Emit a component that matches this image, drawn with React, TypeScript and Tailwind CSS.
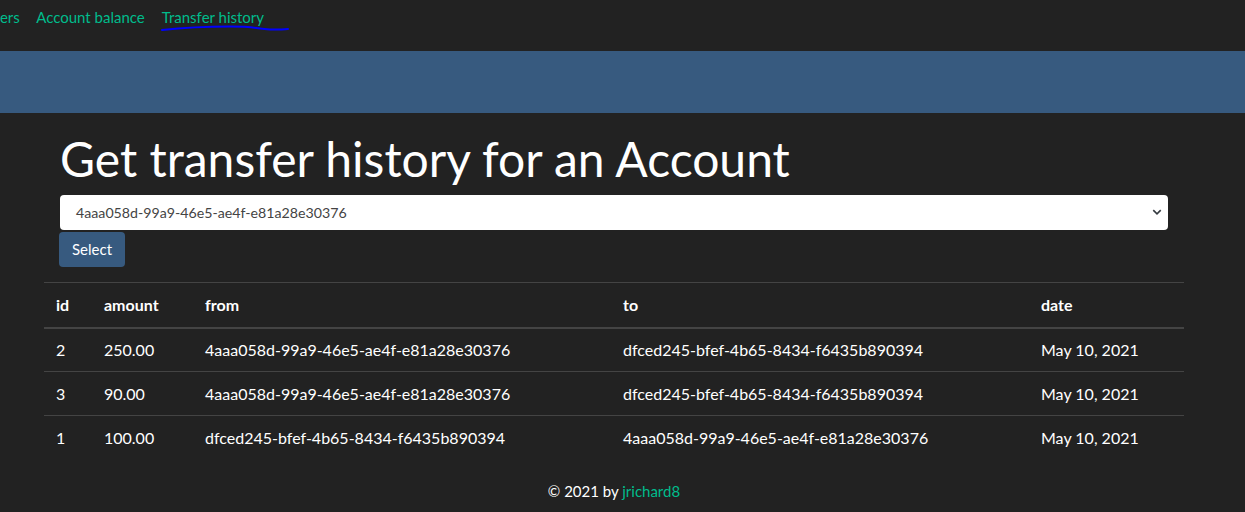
import React from "react";

const transfers = [
  { id: 2, amount: "250.00", from: "4aaa058d-99a9-46e5-ae4f-e81a28e30376", to: "dfced245-bfef-4b65-8434-f6435b890394", date: "May 10, 2021" },
  { id: 3, amount: "90.00", from: "4aaa058d-99a9-46e5-ae4f-e81a28e30376", to: "dfced245-bfef-4b65-8434-f6435b890394", date: "May 10, 2021" },
  { id: 1, amount: "100.00", from: "dfced245-bfef-4b65-8434-f6435b890394", to: "4aaa058d-99a9-46e5-ae4f-e81a28e30376", date: "May 10, 2021" },
];

export default function App() {
  return (
    <div className="min-h-[512px] w-[1245px] overflow-hidden bg-[#222222] text-white font-['Lato',sans-serif] text-[15px]">
      <nav className="relative h-[51px] flex items-start">
        <div className="flex -ml-[48px] pt-[4px]">
          <a className="px-[8px] py-[2px] text-[#00bc8c]">Transfers</a>
          <a className="px-[8.5px] py-[2px] text-[#00bc8c]">Account balance</a>
          <a className="px-[8.5px] py-[2px] text-[#00bc8c]">Transfer history</a>
        </div>
        {/* hand-drawn annotation under the active link */}
        <svg className="absolute left-[160px] top-[25px]" width="132" height="10" viewBox="0 0 132 10">
          <path d="M2 5 C 20 3, 40 1.5, 70 1.5 S 95 4, 110 4.5 S 124 4, 128 4" fill="none" stroke="#0000ff" strokeWidth="2" strokeLinecap="round" />
        </svg>
      </nav>

      <div className="h-[62px] bg-[#375a7f]" />

      <main className="ml-[44px] w-[1140px]">
        <div className="px-[15px] pt-[17px]">
          <h1 className="text-[48px] leading-[57px] mb-[8px] ml-[1px]">Get transfer history for an Account</h1>
          <div className="relative w-[1108px] ml-[1px] h-[35px] bg-white rounded-[4px] flex items-center pl-[16px] text-[14.2px] text-[#444444]">
            4aaa058d-99a9-46e5-ae4f-e81a28e30376
            <svg className="absolute right-[6px] top-[12px]" width="10" height="10" viewBox="0 0 16 16">
              <path d="M2 5 L8 11 L14 5" fill="none" stroke="#343a40" strokeWidth="2.5" />
            </svg>
          </div>
          <button className="mt-[2px] h-[35px] px-[13px] bg-[#375a7f] rounded-[4px] text-white text-[15px]">Select</button>
        </div>

        <table className="mt-[15px] w-[1140px] border-collapse text-left text-[16px]">
          <thead>
            <tr className="border-t border-[#444444] border-b-2 h-[45px]">
              <th className="pl-[12px] w-[48px] font-bold">id</th>
              <th className="pl-[12px] w-[101px] font-bold">amount</th>
              <th className="pl-[12px] w-[418px] font-bold">from</th>
              <th className="pl-[12px] w-[418px] font-bold">to</th>
              <th className="pl-[12px] font-bold">date</th>
            </tr>
          </thead>
          <tbody>
            {transfers.map((t) => (
              <tr key={t.id} className="border-t border-[#444444] h-[44px]">
                <td className="pl-[12px]">{t.id}</td>
                <td className="pl-[12px]">{t.amount}</td>
                <td className="pl-[12px]">{t.from}</td>
                <td className="pl-[12px]">{t.to}</td>
                <td className="pl-[12px]">{t.date}</td>
              </tr>
            ))}
          </tbody>
        </table>
      </main>

      <footer className="w-[1228px] text-center pt-[20px]">
        © 2021 by <a className="text-[#00bc8c]">jrichard8</a>
      </footer>
    </div>
  );
}
